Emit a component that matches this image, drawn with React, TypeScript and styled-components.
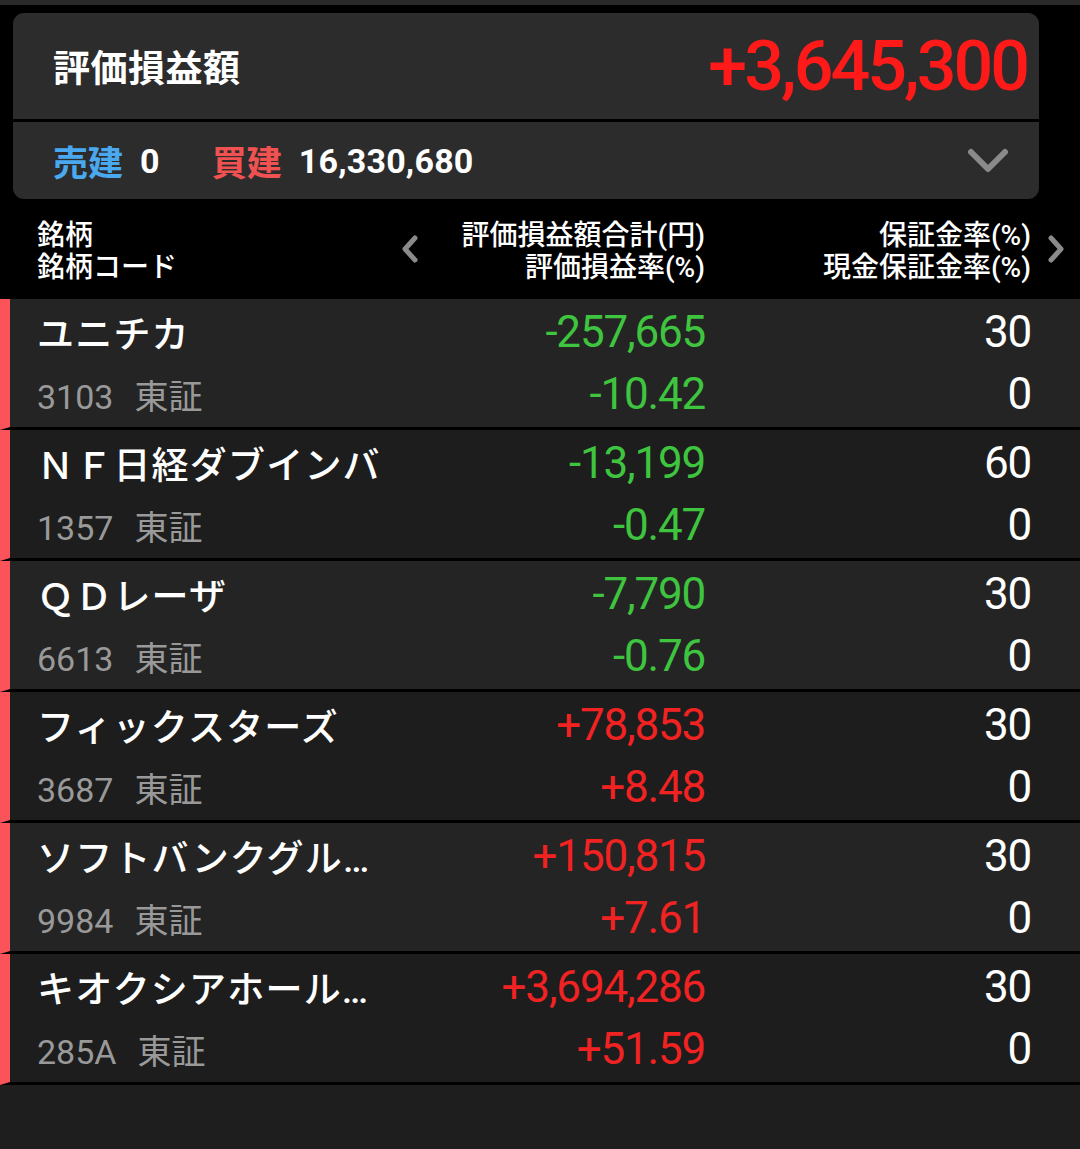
import * as React from "react";
import styled, { createGlobalStyle } from "styled-components";

const GlobalStyle = createGlobalStyle`
  html, body, #root {
    margin: 0;
    padding: 0;
    height: 100%;
    background: #000;
  }
  body {
    font-family: Roboto, "Noto Sans CJK JP", sans-serif;
    color: #fff;
  }
`;

const Page = styled.div`
  display: flex;
  flex-direction: column;
  min-height: 100vh;
  background: #000;
`;

const TopStrip = styled.div`
  height: 5px;
  background: #2a2a2a;
`;

const SummaryCard = styled.section`
  margin: 8px 41px 0 13px;
  border-radius: 11px;
  overflow: hidden;
  background: #2c2c2c;
`;

const SummaryTop = styled.div`
  height: 106px;
  display: flex;
  align-items: center;
  justify-content: space-between;
  padding: 0 12px 0 40px;
  border-bottom: 3px solid #000;
`;

const SummaryTitle = styled.span`
  font-size: 37px;
  font-weight: 700;
  letter-spacing: 0.5px;
`;

const BigNumber = styled.span`
  font-size: 70px;
  font-weight: 500;
  letter-spacing: -3px;
  color: #ff1a1a;
`;

const SummaryBottom = styled.div`
  height: 77px;
  display: flex;
  align-items: center;
  padding: 0 29px 0 40px;
`;

const Side = styled.span<{ $color: string }>`
  font-size: 35px;
  font-weight: 700;
  color: ${(p) => p.$color};
  margin-right: 17px;
`;

const SideValue = styled.span`
  font-size: 34px;
  font-weight: 700;
  margin-right: 52px;
  letter-spacing: 0.2px;
`;

const Spacer = styled.div`
  flex: 1;
`;

const Header = styled.div`
  height: 100px;
  display: grid;
  grid-template-columns: 338px 330px 326px 49px;
  align-items: center;
  padding: 6px 0 0 37px;
  box-sizing: border-box;
  font-size: 28px;
  font-weight: 500;
  line-height: 32px;
`;

const HeadCell = styled.div<{ $align?: string }>`
  display: flex;
  flex-direction: column;
  align-items: ${(p) => p.$align || "flex-start"};
  text-align: ${(p) => (p.$align === "flex-end" ? "right" : "left")};
  white-space: nowrap;
`;

const MidHead = styled.div`
  display: flex;
  align-items: center;
  justify-content: space-between;
  padding-left: 24px;
  margin-top: -6px;
`;

const RightArrow = styled.div`
  padding-left: 14px;
  margin-top: -6px;
`;

const Chevron = styled.svg`
  display: block;
  flex-shrink: 0;
`;

const List = styled.div`
  flex: 1;
  background: #1e1e1e;
`;

const Row = styled.div<{ $alt: boolean }>`
  display: grid;
  grid-template-columns: 338px 330px 326px;
  grid-template-rows: 62px 62px;
  align-items: center;
  padding: 2px 49px 2px 27px;
  border-left: 10px solid #fa535a;
  border-bottom: 3px solid #000;
  background: ${(p) => (p.$alt ? "#1d1d1d" : "#242424")};
`;

const Name = styled.div`
  font-size: 37px;
  font-weight: 500;
  letter-spacing: 1.2px;
  white-space: nowrap;
`;

const Code = styled.div`
  font-size: 34px;
  color: #999;
  white-space: nowrap;
  span + span {
    margin-left: 21px;
  }
`;

const Num = styled.div<{ $color: string }>`
  font-size: 44px;
  text-align: right;
  letter-spacing: -1.2px;
  color: ${(p) => p.$color};
`;

type Holding = {
  name: string;
  code: string;
  pl: string;
  rate: string;
  margin: string;
  cash: string;
};

// names as the list shows them, already shortened by the app
const holdings: Holding[] = [
  { name: "ユニチカ", code: "3103", pl: "-257,665", rate: "-10.42", margin: "30", cash: "0" },
  { name: "ＮＦ日経ダブインバ", code: "1357", pl: "-13,199", rate: "-0.47", margin: "60", cash: "0" },
  { name: "ＱＤレーザ", code: "6613", pl: "-7,790", rate: "-0.76", margin: "30", cash: "0" },
  { name: "フィックスターズ", code: "3687", pl: "+78,853", rate: "+8.48", margin: "30", cash: "0" },
  { name: "ソフトバンクグル…", code: "9984", pl: "+150,815", rate: "+7.61", margin: "30", cash: "0" },
  { name: "キオクシアホール…", code: "285A", pl: "+3,694,286", rate: "+51.59", margin: "30", cash: "0" },
];

const plColor = (v: string) => (v.startsWith("-") ? "#3fc43f" : "#f02222");

const ChevronLeft = () => (
  <Chevron width="22" height="30" viewBox="0 0 22 30">
    <polyline points="16,4 6,15 16,26" fill="none" stroke="#8a8a8a" strokeWidth="5" strokeLinecap="round" strokeLinejoin="round" />
  </Chevron>
);

const ChevronRight = () => (
  <Chevron width="22" height="30" viewBox="0 0 22 30">
    <polyline points="6,4 16,15 6,26" fill="none" stroke="#8a8a8a" strokeWidth="5" strokeLinecap="round" strokeLinejoin="round" />
  </Chevron>
);

const ChevronDown = () => (
  <Chevron width="44" height="30" viewBox="0 0 44 30">
    <polyline points="5,6 22,23 39,6" fill="none" stroke="#8a8a8a" strokeWidth="6" strokeLinecap="round" strokeLinejoin="round" />
  </Chevron>
);

export default function App() {
  return (
    <Page>
      <GlobalStyle />
      <TopStrip />
      <SummaryCard>
        <SummaryTop>
          <SummaryTitle>評価損益額</SummaryTitle>
          <BigNumber>+3,645,300</BigNumber>
        </SummaryTop>
        <SummaryBottom>
          <Side $color="#4aa8ee">売建</Side>
          <SideValue>0</SideValue>
          <Side $color="#f05252">買建</Side>
          <SideValue>16,330,680</SideValue>
          <Spacer />
          <ChevronDown />
        </SummaryBottom>
      </SummaryCard>
      <Header>
        <HeadCell>
          <span>銘柄</span>
          <span>銘柄コード</span>
        </HeadCell>
        <MidHead>
          <ChevronLeft />
          <HeadCell $align="flex-end" style={{ marginTop: 6 }}>
            <span>評価損益額合計(円)</span>
            <span>評価損益率(%)</span>
          </HeadCell>
        </MidHead>
        <HeadCell $align="flex-end">
          <span>保証金率(%)</span>
          <span>現金保証金率(%)</span>
        </HeadCell>
        <RightArrow>
          <ChevronRight />
        </RightArrow>
      </Header>
      <List>
        {holdings.map((h, i) => (
          <Row key={h.code} $alt={i % 2 === 1}>
            <Name>{h.name}</Name>
            <Num $color={plColor(h.pl)}>{h.pl}</Num>
            <Num $color="#fff">{h.margin}</Num>
            <Code>
              <span>{h.code}</span>
              <span>東証</span>
            </Code>
            <Num $color={plColor(h.rate)}>{h.rate}</Num>
            <Num $color="#fff">{h.cash}</Num>
          </Row>
        ))}
      </List>
    </Page>
  );
}
